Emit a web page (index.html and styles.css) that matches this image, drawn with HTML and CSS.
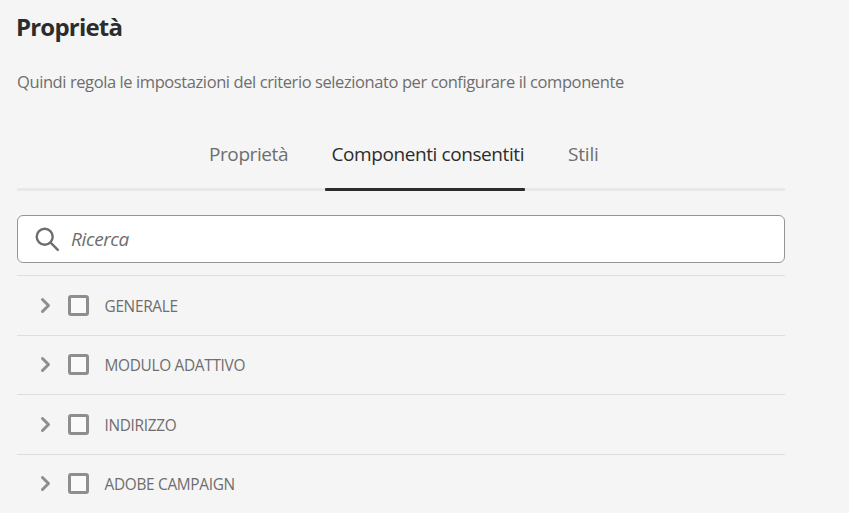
FILE: index.html
```html
<!DOCTYPE html>
<html lang="it">
<head>
<meta charset="utf-8">
<title>Proprietà</title>
<link rel="stylesheet" href="styles.css">
</head>
<body>
<main class="panel">
  <h1 class="title">Proprietà</h1>
  <p class="desc">Quindi regola le impostazioni del criterio selezionato per configurare il componente</p>
  <nav class="tabs">
    <a class="tab tab-properties">Proprietà</a>
    <a class="tab tab-active">Componenti consentiti</a>
    <a class="tab tab-styles">Stili</a>
  </nav>
  <div class="search">
    <svg class="search-icon" width="26" height="26" viewBox="0 0 26 26"><circle cx="10.7" cy="10.7" r="8"/><path d="M16.6 16.6 23.8 23.8"/></svg>
    <span class="placeholder">Ricerca</span>
  </div>
  <ul class="groups">
    <li class="group"><svg class="chevron" width="12" height="17" viewBox="0 0 12 17"><path d="M2.5 2.5 8.5 8.5 2.5 14.5"/></svg><span class="checkbox"></span><span class="name">GENERALE</span></li>
    <li class="group"><svg class="chevron" width="12" height="17" viewBox="0 0 12 17"><path d="M2.5 2.5 8.5 8.5 2.5 14.5"/></svg><span class="checkbox"></span><span class="name">MODULO ADATTIVO</span></li>
    <li class="group"><svg class="chevron" width="12" height="17" viewBox="0 0 12 17"><path d="M2.5 2.5 8.5 8.5 2.5 14.5"/></svg><span class="checkbox"></span><span class="name">INDIRIZZO</span></li>
    <li class="group"><svg class="chevron" width="12" height="17" viewBox="0 0 12 17"><path d="M2.5 2.5 8.5 8.5 2.5 14.5"/></svg><span class="checkbox"></span><span class="name">ADOBE CAMPAIGN</span></li>
  </ul>
</main>
</body>
</html>
```
FILE: styles.css
```css
* { box-sizing: border-box; }
body {
  margin: 0;
  background: #f5f5f5;
  color: #6e6e6e;
  font-family: "Open Sans", "Noto Sans", sans-serif;
}
.panel { width: 785px; padding: 11px 0 0 17px; }
.title {
  margin: 0 0 0 -1px;
  color: #2c2c2c;
  font-size: 24px;
  font-weight: 700;
  line-height: 32px;
  letter-spacing: -0.8px;
}
.desc {
  margin: 27px 0 0;
  font-size: 16.5px;
  line-height: 24px;
  letter-spacing: -0.41px;
  white-space: nowrap;
}
.tabs {
  display: flex;
  height: 68px;
  margin-top: 29px;
  padding-left: 185px;
  background: linear-gradient(#e8e8e8, #e8e8e8) bottom / 100% 3px no-repeat;
}
.tab {
  position: relative;
  height: 68px;
  padding: 17px 0 0 7px;
  font-size: 19px;
  line-height: 28px;
  letter-spacing: -0.41px;
  white-space: nowrap;
}
.tab-properties { width: 122.5px; }
.tab-active { width: 200.5px; color: #2c2c2c; }
.tab-active::after {
  content: "";
  position: absolute;
  left: 0;
  right: 0;
  bottom: 0;
  height: 3px;
  border-radius: 1px;
  background: #2c2c2c;
}
.tab-styles { padding-left: 43px; letter-spacing: -0.2px; }
.search {
  display: flex;
  align-items: center;
  height: 48px;
  margin-top: 24px;
  padding-left: 16px;
  border: 1px solid #959595;
  border-radius: 6px;
  background: #fff;
}
.search-icon { fill: none; stroke: #6e6e6e; stroke-width: 2.4; stroke-linecap: round; }
.placeholder {
  margin-left: 11px;
  font-size: 19px;
  font-style: italic;
  line-height: 28px;
  letter-spacing: -0.38px;
}
.groups { margin: 12px 0 0; padding: 0; list-style: none; }
.group {
  display: flex;
  align-items: flex-start;
  height: 60px;
  padding: 19px 0 0 23px;
  border-top: 1px solid #dedede;
}
.group:nth-child(even) { height: 59px; padding-top: 18px; }
.chevron {
  margin-top: 2px;
  fill: none;
  stroke: #8e8e8e;
  stroke-width: 3;
  stroke-linecap: round;
  stroke-linejoin: round;
}
.checkbox {
  width: 21px;
  height: 21px;
  margin-left: 16px;
  border: 3px solid #8e8e8e;
  border-radius: 3px;
  background: #fafafa;
}
.name {
  margin-left: 15.5px;
  padding-top: 1px;
  font-size: 15.4px;
  line-height: 22px;
  letter-spacing: -0.31px;
  white-space: nowrap;
}
```
